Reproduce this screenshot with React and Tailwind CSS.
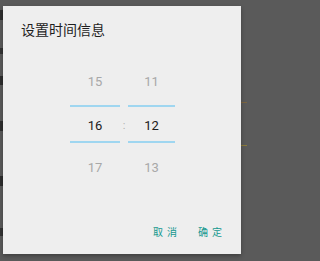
import React from "react";

const cjk = { fontFamily: '"Noto Sans CJK SC", "Noto Sans", sans-serif' };
const num = { fontFamily: 'Roboto, "Noto Sans", sans-serif' };

function Column({ top, mid, bottom, width }) {
  return (
    <div className={`flex flex-col items-center ${width}`} style={num}>
      <div className="h-[20px] leading-[20px] text-[13px] text-[#a8a8a8]">{top}</div>
      <div className="mt-[13px] h-[2px] w-full bg-[#9fd6f0]" />
      <div className="mt-[9px] h-[20px] leading-[20px] text-[13px] text-[#202020]">{mid}</div>
      <div className="mt-[5px] h-[2px] w-full bg-[#9fd6f0]" />
      <div className="mt-[15px] h-[20px] leading-[20px] text-[13px] text-[#a8a8a8]">{bottom}</div>
    </div>
  );
}

export default function App() {
  return (
    <div className="relative w-full min-w-[247px] h-screen min-h-[261px] overflow-hidden bg-[#5a5a5a]">
      {/* background list behind the overlay */}
      <div className="flex flex-col">
        <div className="mt-[10px] h-[10px] w-[3px] bg-[#2e2e2e]" />
        <div className="mt-[28px] h-[6px] w-[3px] bg-[#333]" />
        <div className="mt-[22px] h-[9px] w-[3px] bg-[#2e2e2e]" />
        <div className="mt-[36px] h-[10px] w-[3px] bg-[#2e2e2e]" />
        <div className="mt-[45px] h-[10px] w-[3px] bg-[#2e2e2e]" />
        <div className="mt-[42px] h-[8px] w-[3px] bg-[#333]" />
      </div>
      <div className="absolute left-[241px] top-[102px] h-px w-[6px] bg-[#7a6440]" />
      <div className="absolute left-[241px] top-[145px] h-px w-[6px] bg-[#8a7a3a]" />

      {/* dialog */}
      <div className="absolute left-[3px] top-[6px] w-[238px] h-[248px] bg-[#eeeeee] shadow-[0_2px_4px_rgba(0,0,0,0.3)] flex flex-col">
        <div className="pl-[18px] pt-[13px] h-[20px] box-content leading-[20px] text-[14px] text-[#1e1e1e]" style={cjk}>
          设置时间信息
        </div>
        <div className="flex pl-[67px] mt-[33px]">
          <Column top="15" mid="16" bottom="17" width="w-[50px]" />
          <div className="w-[8px] flex flex-col items-center">
            <div className="mt-[44px] h-[20px] leading-[20px] text-[11px] text-[#b0b0b0]" style={num}>:</div>
          </div>
          <Column top="11" mid="12" bottom="13" width="w-[47px]" />
        </div>
        <div className="mt-auto mb-[15px] flex justify-end pr-[19px] gap-[21px] text-[10px] leading-[14px] tracking-[4px] text-[#14988f]" style={cjk}>
          <span className="mr-[-4px]">取消</span>
          <span className="mr-[-4px]">确定</span>
        </div>
      </div>
    </div>
  );
}
